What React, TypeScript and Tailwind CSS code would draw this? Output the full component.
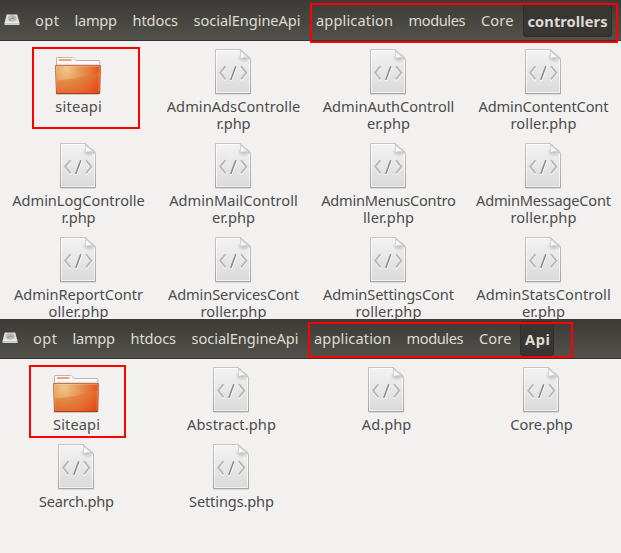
import { useLayoutEffect, useRef, useState } from "react";

/* One line of text whose tracking is adjusted to fill a given width. */
function Fit({ text, width }: { text: string; width: number }) {
  const ref = useRef<HTMLSpanElement>(null);
  const [spacing, setSpacing] = useState(0);
  useLayoutEffect(() => {
    if (!ref.current) return;
    const natural = ref.current.getBoundingClientRect().width;
    setSpacing((width + 1 - natural) / (text.length - 1));
  }, [text, width]);
  return (
    <span ref={ref} className="block whitespace-pre" style={{ letterSpacing: spacing, marginRight: -spacing }}>
      {text}
    </span>
  );
}

type Line = [string, number];

function FileIcon() {
  return (
    <svg width="40" height="48" viewBox="0 0 40 48" className="block">
      <defs>
        <linearGradient id="page" x1="0" y1="0" x2="0" y2="1">
          <stop offset="0" stopColor="#f3f3f3" />
          <stop offset="1" stopColor="#dadada" />
        </linearGradient>
        <linearGradient id="edge" x1="0" y1="0" x2="0" y2="1">
          <stop offset="0" stopColor="#c6c6c6" />
          <stop offset="1" stopColor="#a5a5a5" />
        </linearGradient>
        <linearGradient id="fold" x1="0" y1="1" x2="1" y2="0">
          <stop offset="0.1" stopColor="#ffffff" />
          <stop offset="0.65" stopColor="#c9c9c9" />
        </linearGradient>
        <radialGradient id="foldShade">
          <stop offset="0" stopColor="#000" stopOpacity="0.2" />
          <stop offset="1" stopColor="#000" stopOpacity="0" />
        </radialGradient>
      </defs>
      <path d="M2 45.5H38" stroke="#000" strokeOpacity="0.09" />
      <path d="M2.5.5H27.5L37.5 10V44.5H2.5Z" fill="url(#page)" stroke="url(#edge)" />
      <path d="M3.5 43.5V1.5H26.5M36.5 11V43.5H3.5" fill="none" stroke="#fff" strokeOpacity="0.65" />
      <ellipse cx="31" cy="9" rx="7" ry="5" fill="url(#foldShade)" />
      <path d="M27 .5C28.2 3 27.8 6 27 9.5C30 8.6 34 8.5 37.5 10Z" fill="url(#fold)" stroke="#c2c2c2" strokeWidth="0.7" />
      <path d="M28.1 3.5C28.5 5.5 28.1 7 27.7 8.2C29.5 7.7 31.5 7.7 33.2 8Z" fill="#fafafa" />
      <g fill="none" strokeWidth="1.9">
        <path d="M12.5 18.2L7.2 24.8L12.5 31.4M28 18.2L33.3 24.8L28 31.4" stroke="#fff" />
        <path d="M12.5 17.2L7.2 23.8L12.5 30.4M28 17.2L33.3 23.8L28 30.4" stroke="#b8b8b8" />
        <path d="M23.3 18L18.2 32" stroke="#fff" />
        <path d="M22.8 17.2L17.8 31" stroke="#878787" strokeWidth="1.5" />
      </g>
    </svg>
  );
}

function FolderIcon() {
  return (
    <svg width="48" height="48" viewBox="1 0 48 48" className="block">
      <defs>
        <radialGradient id="front" gradientUnits="userSpaceOnUse" cx="13" cy="21" r="38">
          <stop offset="0" stopColor="#f2c78a" />
          <stop offset="0.35" stopColor="#e79c5b" />
          <stop offset="0.72" stopColor="#e86d32" />
          <stop offset="0.9" stopColor="#e94f1a" />
          <stop offset="1" stopColor="#dd4618" />
        </radialGradient>
        <linearGradient id="lower" x1="0" y1="0" x2="0" y2="1">
          <stop offset="0" stopColor="#d98032" stopOpacity="0.5" />
          <stop offset="1" stopColor="#e0531b" stopOpacity="0.4" />
        </linearGradient>
        <linearGradient id="rim" x1="0" y1="0" x2="0" y2="1">
          <stop offset="0" stopColor="#c9713f" />
          <stop offset="1" stopColor="#b33914" />
        </linearGradient>
      </defs>
      <path d="M2.5 45.5H46" stroke="#000" strokeOpacity="0.16" />
      <path d="M3.5 18V9.2Q3.5 8.5 4.2 8.5H19.5Q20.5 8.5 21.5 9.5L23 11.5H46.5Q46.8 11.5 46.8 12.2V18Z" fill="#fbfbfb" stroke="#b5b5b1" />
      <path d="M6 11H18.5" stroke="#efa477" strokeWidth="2" />
      <path d="M4 15.3H46.5" stroke="#d8d8d8" />
      <path d="M2.5 16.5H47.5L46.7 44.5H3.5Z" fill="url(#front)" stroke="url(#rim)" strokeLinejoin="round" />
      <path d="M3.5 31.7C18 30.5 32 28.2 46.5 23.6L46.2 43.8H4Z" fill="url(#lower)" />
      <path d="M3.8 43.2L3.5 17.5H46.5L46 43.2" fill="none" stroke="#fff" strokeOpacity="0.22" />
    </svg>
  );
}

function DriveIcon() {
  return (
    <svg width="16" height="14" viewBox="0 0 16 14" className="block">
      <path d="M2.7 1.5H13.2L15.3 9.2V12H.7V9.2Z" fill="#dfdfdc" />
      <path d="M.7 9.5H15.3V11.7H.7Z" fill="#c9c9c5" />
      <path d="M1 9.4H15" stroke="#f5f5f3" strokeWidth="0.7" />
      <ellipse cx="8.2" cy="5.3" rx="4" ry="2.7" fill="#bebebb" stroke="#aaa" strokeWidth="0.7" />
      <path d="M5.2 7L9.6 4.1M8.2 5.6H10.5" stroke="#888" strokeWidth="0.8" />
    </svg>
  );
}

function Item({ folder, lines }: { folder?: boolean; lines: Line[] }) {
  return (
    <div className="flex flex-col items-center">
      <div className="flex h-[49px] justify-center">{folder ? <FolderIcon /> : <FileIcon />}</div>
      <div className="flex flex-col items-center pl-px text-[14.6px] leading-[17px] text-[#4c4c4c]">
        {lines.map(([t, w]) => (
          <Fit key={t} text={t} width={w} />
        ))}
      </div>
    </div>
  );
}

const controllers: Line[][] = [
  [["siteapi", 45.5]],
  [["AdminAdsControlle", 132.5], ["r.php", 33]],
  [["AdminAuthControll", 130.5], ["er.php", 42]],
  [["AdminContentCont", 129], ["roller.php", 65]],
  [["AdminLogControlle", 131.5], ["r.php", 33]],
  [["AdminMailControll", 127.5], ["er.php", 42]],
  [["AdminMenusContro", 133.5], ["ller.php", 50]],
  [["AdminMessageCont", 134], ["roller.php", 65]],
  [["AdminReportContr", 128], ["oller.php", 59]],
  [["AdminServicesCont", 130], ["roller.php", 65]],
  [["AdminSettingsCont", 130], ["roller.php", 65]],
  [["AdminStatsControll", 133.5], ["er.php", 42]],
];

const api: Line[][] = [
  [["Siteapi", 46]],
  [["Abstract.php", 88]],
  [["Ad.php", 48.5]],
  [["Core.php", 61.5]],
  [["Search.php", 74]],
  [["Settings.php", 84]],
];

const crumbs: Line[] = [
  ["opt", 23],
  ["lampp", 41.5],
  ["htdocs", 44.5],
  ["socialEngineApi", 106],
  ["application", 76],
  ["modules", 56],
  ["Core", 31.5],
];

function Crumbs() {
  return (
    <>
      <DriveIcon />
      <div className="ml-[15px] flex gap-[15.5px]">
        {crumbs.map(([t, w]) => (
          <Fit key={t} text={t} width={w} />
        ))}
      </div>
    </>
  );
}

export default function App() {
  return (
    <main className="relative h-[553px] w-[621px] overflow-hidden bg-[#f2f1f0] font-['Noto_Sans',sans-serif] text-[14.6px]">
      <section className="h-[319px] overflow-hidden">
        <header className="flex h-[41px] items-center border-b border-[#35342f] bg-linear-to-b from-[#3b3a36] to-[#53514a] pl-1 leading-5 text-[#dfdbd2]">
          <Crumbs />
          <div className="ml-[9.5px] flex h-[33px] w-[89px] items-center justify-center rounded-[3px] border border-[#2f2e2b] bg-[#373632] pt-0.5 font-bold">
            <Fit text="controllers" width={79} />
          </div>
        </header>
        <div className="grid auto-rows-[94px] grid-cols-[repeat(4,155px)] pt-2 pl-[0.5px]">
          {controllers.map((lines, i) => (
            <Item key={i} folder={i === 0} lines={lines} />
          ))}
        </div>
      </section>

      <section>
        <header className="flex h-10 items-center border-b border-[#35342f] bg-linear-to-b from-[#3b3a36] to-[#53514a] pb-px pl-0.5 leading-5 text-[#dfdbd2]">
          <Crumbs />
          <div className="ml-[9px] flex h-[35px] w-[34px] items-center justify-center rounded-[3px] border border-[#2f2e2b] bg-[#373632] pt-0.5 font-bold">
            <Fit text="Api" width={24} />
          </div>
        </header>
        <div className="-ml-[1.5px] grid auto-rows-[77px] grid-cols-[repeat(4,155px)] pt-2">
          {api.map((lines, i) => (
            <Item key={i} folder={i === 0} lines={lines} />
          ))}
        </div>
      </section>

      <div className="absolute top-[3px] left-[310px] h-10 w-[308px] border-2 border-[#f00]" />
      <div className="absolute top-[47px] left-8 h-[82px] w-[108px] border-2 border-[#f00]" />
      <div className="absolute top-[322px] left-[308px] h-9 w-[265px] border-2 border-[#f00]" />
      <div className="absolute top-[365px] left-[29px] h-[73px] w-[97px] border-2 border-[#f00]" />
    </main>
  );
}
